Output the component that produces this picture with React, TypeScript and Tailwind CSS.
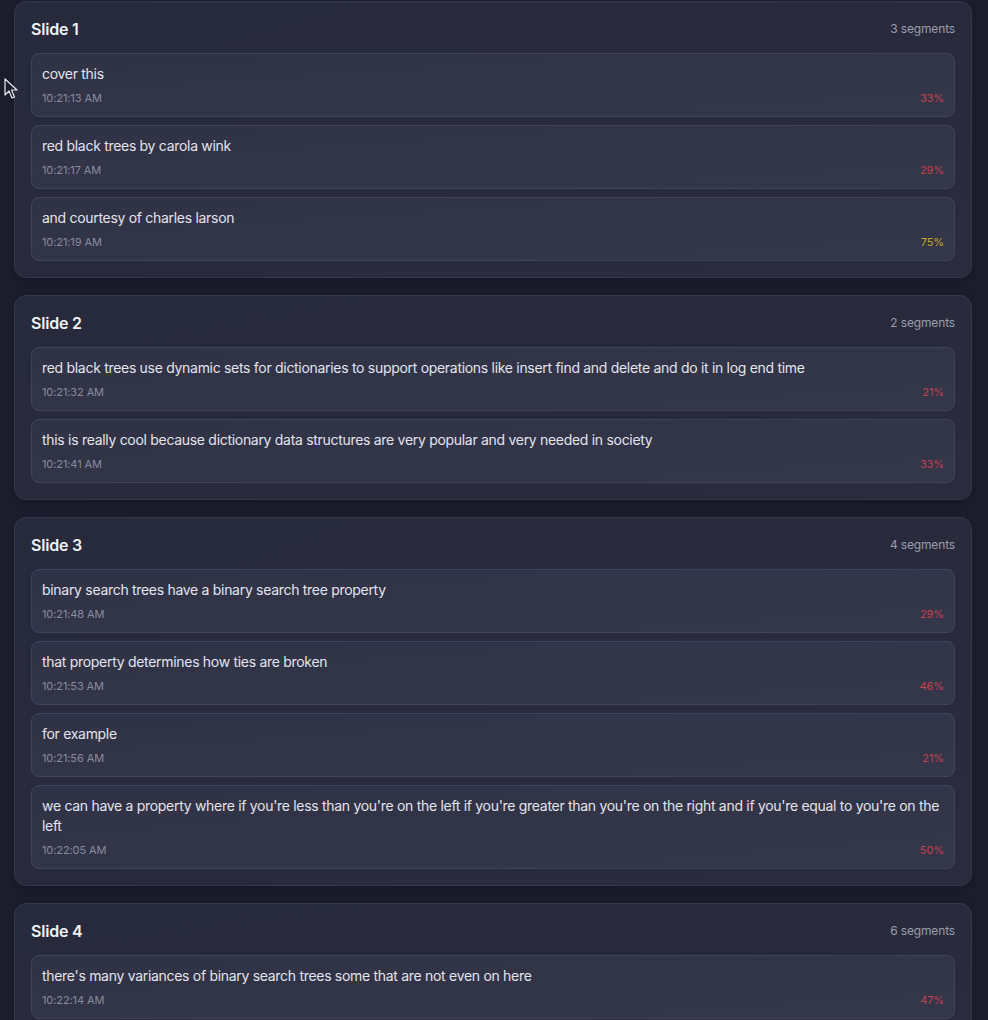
import React from 'react';

interface Segment {
  text: string;
  time: string;
  confidence: number;
}

interface Slide {
  title: string;
  segments: Segment[];
  total: number;
}

const slides: Slide[] = [
  {
    title: 'Slide 1',
    total: 3,
    segments: [
      { text: 'cover this', time: '10:21:13 AM', confidence: 33 },
      { text: 'red black trees by carola wink', time: '10:21:17 AM', confidence: 29 },
      { text: 'and courtesy of charles larson', time: '10:21:19 AM', confidence: 75 },
    ],
  },
  {
    title: 'Slide 2',
    total: 2,
    segments: [
      {
        text: 'red black trees use dynamic sets for dictionaries to support operations like insert find and delete and do it in log end time',
        time: '10:21:32 AM',
        confidence: 21,
      },
      {
        text: 'this is really cool because dictionary data structures are very popular and very needed in society',
        time: '10:21:41 AM',
        confidence: 33,
      },
    ],
  },
  {
    title: 'Slide 3',
    total: 4,
    segments: [
      { text: 'binary search trees have a binary search tree property', time: '10:21:48 AM', confidence: 29 },
      { text: 'that property determines how ties are broken', time: '10:21:53 AM', confidence: 46 },
      { text: 'for example', time: '10:21:56 AM', confidence: 21 },
      {
        text: "we can have a property where if you're less than you're on the left if you're greater than you're on the right and if you're equal to you're on the left",
        time: '10:22:05 AM',
        confidence: 50,
      },
    ],
  },
  {
    title: 'Slide 4',
    total: 6,
    segments: [
      {
        text: "there's many variances of binary search trees some that are not even on here",
        time: '10:22:14 AM',
        confidence: 47,
      },
    ],
  },
];

const confidenceColor = (c: number) => (c >= 70 ? 'text-[#c9a52c]' : 'text-[#c2444d]');

const SegmentRow: React.FC<{ seg: Segment }> = ({ seg }) => (
  <div className="rounded-lg border border-[#41435a] bg-gradient-to-br from-[#303246] to-[#34364a] px-[10px] pt-[10px] pb-[10px]">
    <div className="text-[14px] leading-5 tracking-[-0.3px] text-[#e3e4ec]">{seg.text}</div>
    <div className="mt-[6px] flex items-center justify-between text-[11px] leading-4 tracking-[-0.1px]">
      <span className="text-[#8a8c9d]">{seg.time}</span>
      <span className={confidenceColor(seg.confidence)}>{seg.confidence}%</span>
    </div>
  </div>
);

const SlideCard: React.FC<{ slide: Slide }> = ({ slide }) => (
  <div className="rounded-xl border border-[#34364a] bg-gradient-to-br from-[#272a3c] to-[#2a2b3c] p-4 shadow-[0_4px_14px_rgba(0,0,0,0.25)]">
    <div className="mb-[13px] flex items-center justify-between">
      <h2 className="text-[16px] font-semibold leading-[22px] tracking-[-0.2px] text-[#f1f2f6]">{slide.title}</h2>
      <span className="text-[12px] tracking-[-0.15px] text-[#9b9dac]">{slide.total} segments</span>
    </div>
    <div className="flex flex-col gap-2">
      {slide.segments.map((seg, i) => (
        <SegmentRow key={i} seg={seg} />
      ))}
    </div>
  </div>
);

export default function App() {
  return (
    <div
      className="relative min-h-screen bg-[#1c1e2e] pt-px pl-[14px] pr-[16px] pb-6"
      style={{ fontFamily: 'Inter, "Noto Sans", sans-serif' }}
    >
      <div className="flex flex-col gap-[17px]">
        {slides.map((s) => (
          <SlideCard key={s.title} slide={s} />
        ))}
      </div>
      <svg
        className="absolute left-[4px] top-[78px]"
        width="14"
        height="22"
        viewBox="0 0 14 22"
      >
        <path d="M1 1 L1 17 L5 13 L8 20 L10.5 19 L7.5 12 L13 12 Z" fill="#1c1e2e" stroke="#e8e8ee" strokeWidth="1.2" strokeLinejoin="round" />
      </svg>
    </div>
  );
}
